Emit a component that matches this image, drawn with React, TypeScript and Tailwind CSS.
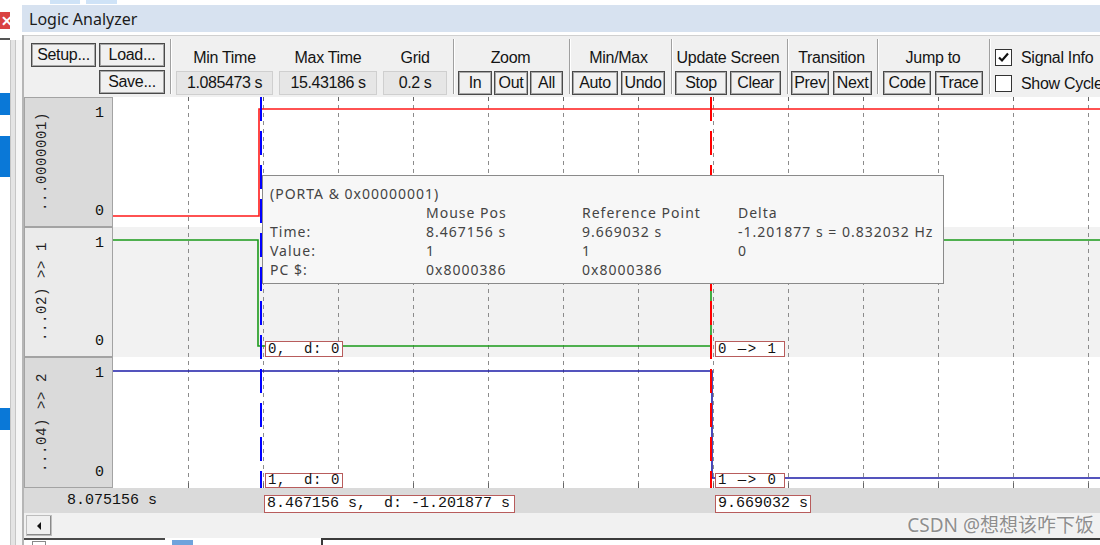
import React from 'react';

type Kids = { children?: React.ReactNode };

const GRID = Array.from({ length: 13 }, (_, i) => 75 * (i + 1));

function Btn({ w, className = '', children }: { w: string; className?: string } & Kids) {
  return (
    <div
      className={`${w} ${className} h-[24px] flex items-center justify-center border border-[#4a4a4a] bg-[#f0f0f0] shadow-[inset_0_0_0_1px_#a8a8a8] text-[16px] leading-none tracking-[-0.3px] text-[#141414]`}
    >
      {children}
    </div>
  );
}

function Field({ w, label, value, className = '' }: { w: string; label: string; value: string; className?: string }) {
  return (
    <div className={`${w} ${className} flex flex-col`}>
      <div className="h-[22px] leading-[22px] text-center tracking-[-0.3px]">{label}</div>
      <div className="mt-[2px] h-[24px] bg-[#e6e6e6] border border-[#cfcfcf] flex items-center justify-center text-[16px] tracking-[-0.4px]">
        {value}
      </div>
    </div>
  );
}

function Sep() {
  return <div className="w-[2px] shrink-0 my-[3px] border-l border-l-[#a0a0a0] border-r border-r-white" />;
}

function Group({ w, pl, label, children }: { w: string; pl: string; label: string } & Kids) {
  return (
    <div className={`${w} ${pl} shrink-0 flex`}>
      <div className="flex flex-col w-fit pt-[11px]">
        <div className="h-[22px] leading-[22px] text-center whitespace-nowrap tracking-[-0.3px]">{label}</div>
        <div className="mt-[2px] flex">{children}</div>
      </div>
    </div>
  );
}

function SigLabel({ name, bg, h }: { name: string; bg: string; h: string }) {
  return (
    <div className={`${h} ${bg} border border-[#a3a3a3] flex`}>
      <div className="w-[27px] pl-[9px] flex items-center">
        <span className="[writing-mode:vertical-rl] rotate-180 font-['Liberation_Mono',monospace] text-[14px] tracking-[0.6px] text-[#222] leading-[17px]">
          {name}
        </span>
      </div>
      <div className="flex-1 flex flex-col justify-between items-end pr-[8px] pt-[7px] pb-[5px] font-['Liberation_Mono',monospace] text-[15px] leading-[18px] text-[#111]">
        <span>1</span>
        <span>0</span>
      </div>
    </div>
  );
}

function Check({ checked, label, className = '' }: { checked: boolean; label: string; className?: string }) {
  return (
    <div className={`flex items-center h-[17px] ${className}`}>
      <div className="w-[17px] h-[17px] shrink-0 border border-[#333] bg-white flex items-center justify-center">
        {checked && (
          <svg width="13" height="13" viewBox="0 0 13 13">
            <path d="M2 6.5 L5 9.5 L11 2.5" stroke="#111" strokeWidth="2.2" fill="none" />
          </svg>
        )}
      </div>
      <span className="ml-[9px] whitespace-nowrap tracking-[-0.3px]">{label}</span>
    </div>
  );
}

export default function App() {
  const mono = "font-['Liberation_Mono',monospace]";
  return (
    <div className="w-[1100px] h-[545px] overflow-hidden bg-white flex flex-col font-['Liberation_Sans',Arial,sans-serif] text-[16px] text-[#141414]">
      {/* top strip */}
      <div className="h-[5px] flex bg-white">
        <div className="ml-[50px] w-[30px] h-[4px] bg-[#cfe3f7]" />
        <div className="ml-[6px] w-[31px] h-[4px] bg-[#cfe3f7]" />
      </div>

      <div className="flex h-[540px]">
        {/* left strip */}
        <div className="w-[22px] shrink-0 flex">
          <div className="w-[10px] flex flex-col">
            <div className="mt-[7px] h-[17px] bg-[#d94141] flex items-center justify-end overflow-hidden">
              <span className="text-white text-[14px] leading-none font-bold -mr-[3px]">✕</span>
            </div>
            <div className="mt-[9px] h-[2px] bg-[#555]" />
            <div className="mt-[53px] h-[22px] bg-[#0a78d7]" />
            <div className="mt-[21px] h-[41px] bg-[#0a78d7]" />
            <div className="mt-[231px] h-[22px] bg-[#0a78d7]" />
          </div>
          <div className="w-[12px] flex flex-col">
            <div className="h-[35px]" />
            <div className="flex-1 flex">
              <div className="w-[6px] bg-[#e4e4e4] border-x border-[#c6c6c6]" />
              <div className="w-[6px] bg-[#f6f6f6]" />
            </div>
          </div>
        </div>

        {/* main */}
        <div className="flex-1 min-w-0 flex flex-col">
          <div className="h-[27px] bg-[#d7e2f0] flex items-center pl-[7px] font-['Noto_Sans',sans-serif] text-[16px] text-[#1b1b1b]">
            Logic Analyzer
          </div>
          <div className="h-[3px] bg-white" />

          <div className="flex-1 flex flex-col border-l-2 border-[#b6b6b6]">
            {/* toolbar */}
            <div className="h-[62px] flex overflow-hidden bg-[#f0f0f0] border-t border-[#d0d0d0]">
              <div className="w-[146px] shrink-0 pl-[7px] pt-[7px] flex flex-col">
                <div className="flex">
                  <Btn w="w-[65px]">Setup...</Btn>
                  <Btn w="w-[66px]" className="ml-[3px]">Load...</Btn>
                </div>
                <div className="flex mt-[3px]">
                  <Btn w="w-[66px]" className="ml-[68px]">Save...</Btn>
                </div>
              </div>
              <Sep />
              <div className="w-[281px] shrink-0 pl-[4px] pt-[11px] flex">
                <Field w="w-[97px]" label="Min Time" value="1.085473 s" />
                <Field w="w-[98px]" className="ml-[6px]" label="Max Time" value="15.43186 s" />
                <Field w="w-[64px]" className="ml-[6px]" label="Grid" value="0.2 s" />
              </div>
              <Sep />
              <Group w="w-[114px]" pl="pl-[3px]" label="Zoom">
                <Btn w="w-[34px]">In</Btn>
                <Btn w="w-[34px]" className="ml-[2px]">Out</Btn>
                <Btn w="w-[33px]" className="ml-[2px]">All</Btn>
              </Group>
              <Sep />
              <Group w="w-[100px]" pl="pl-[1px]" label="Min/Max">
                <Btn w="w-[46px]">Auto</Btn>
                <Btn w="w-[44px]" className="ml-[3px]">Undo</Btn>
              </Group>
              <Sep />
              <Group w="w-[114px]" pl="pl-[2px]" label="Update Screen">
                <Btn w="w-[52px]">Stop</Btn>
                <Btn w="w-[51px]" className="ml-[3px]">Clear</Btn>
              </Group>
              <Sep />
              <Group w="w-[88px]" pl="pl-[2px]" label="Transition">
                <Btn w="w-[38px]">Prev</Btn>
                <Btn w="w-[39px]" className="ml-[4px]">Next</Btn>
              </Group>
              <Sep />
              <Group w="w-[110px]" pl="pl-[4px]" label="Jump to">
                <Btn w="w-[48px]">Code</Btn>
                <Btn w="w-[48px]" className="ml-[4px]">Trace</Btn>
              </Group>
              <Sep />
              <div className="pl-[4px] pt-[13px] shrink-0 flex flex-col">
                <Check checked label="Signal Info" />
                <Check checked={false} label="Show Cycles" className="mt-[9px]" />
              </div>
            </div>

            {/* signals */}
            <div className="h-[391px] flex">
              <div className="w-[89px] shrink-0 flex flex-col">
                <SigLabel name="...0000001)" bg="bg-[#dadada]" h="h-[130px]" />
                <SigLabel name="...02) >> 1" bg="bg-[#ebebeb]" h="h-[130px]" />
                <SigLabel name="...04) >> 2" bg="bg-[#dadada]" h="h-[131px]" />
              </div>
              <div className="flex-1 relative flex flex-col">
                <div className="h-[130px] bg-white" />
                <div className="h-[130px] bg-[#f2f2f2]" />
                <div className="h-[131px] bg-white" />

                <svg className="absolute left-0 top-0" width="987" height="391" viewBox="0 0 987 391">
                  {GRID.map((x) => (
                    <g key={x}>
                      <line x1={x + 0.5} y1={0} x2={x + 0.5} y2={391} stroke="#8c8c8c" strokeDasharray="4 4" />
                      <line x1={x + 0.5} y1={0} x2={x + 0.5} y2={4} stroke="#666" />
                      <line x1={x + 0.5} y1={386} x2={x + 0.5} y2={391} stroke="#666" />
                    </g>
                  ))}
                  <path d="M0 119 H146 V12 H987" stroke="#ff1a1a" strokeWidth="1.6" fill="none" />
                  <path d="M0 143 H145 V249 H598 V143 H987" stroke="#1a9a1a" strokeWidth="1.6" fill="none" />
                  <path d="M0 274 H599 V381 H987" stroke="#1c1ca8" strokeWidth="1.6" fill="none" />
                  <line x1={148} y1={0} x2={148} y2={391} stroke="#0000ff" strokeWidth="2" strokeDasharray="24 10" />
                  <line x1={598} y1={0} x2={598} y2={391} stroke="#ff0000" strokeWidth="2" strokeDasharray="24 10" />
                </svg>

                <div className={`absolute left-[152px] top-[244px] w-[78px] h-[16px] border border-[#b85c5c] bg-white ${mono} text-[14px] leading-[14px] pl-[2px] tracking-[0.6px] whitespace-pre text-[#111]`}>
                  {'0,  d: 0'}
                </div>
                <div className={`absolute left-[602px] top-[244px] w-[70px] h-[16px] border border-[#b85c5c] bg-white ${mono} text-[14px] leading-[14px] pl-[2px] tracking-[1.5px] whitespace-pre text-[#111]`}>
                  {'0 —> 1'}
                </div>
                <div className={`absolute left-[152px] top-[376px] w-[78px] h-[15px] border border-[#b85c5c] bg-white ${mono} text-[14px] leading-[13px] pl-[2px] tracking-[0.6px] whitespace-pre text-[#111]`}>
                  {'1,  d: 0'}
                </div>
                <div className={`absolute left-[602px] top-[376px] w-[70px] h-[15px] border border-[#b85c5c] bg-white ${mono} text-[14px] leading-[13px] pl-[2px] tracking-[1.5px] whitespace-pre text-[#111]`}>
                  {'1 —> 0'}
                </div>

                {/* tooltip */}
                <div className="absolute left-[149px] top-[78px] w-[682px] h-[109px] bg-[#f7f7f7] border border-[#8a8a8a] pl-[7px] pt-[8px] font-['Noto_Sans',sans-serif] text-[14px] leading-[19px] tracking-[1px] text-[#444]">
                  <div>(PORTA &amp; 0x00000001)</div>
                  <div className="grid grid-cols-[156px_156px_156px_1fr]">
                    <div />
                    <div>Mouse Pos</div>
                    <div>Reference Point</div>
                    <div>Delta</div>
                    <div>Time:</div>
                    <div>8.467156 s</div>
                    <div>9.669032 s</div>
                    <div>-1.201877 s = 0.832032 Hz</div>
                    <div>Value:</div>
                    <div>1</div>
                    <div>1</div>
                    <div>0</div>
                    <div>PC $:</div>
                    <div>0x8000386</div>
                    <div>0x8000386</div>
                    <div />
                  </div>
                </div>
              </div>
            </div>

            {/* time bar */}
            <div className={`h-[25px] bg-[#dadada] flex items-end ${mono} text-[15px] text-[#111]`}>
              <div className="w-[240px] pl-[43px] h-full flex items-center pt-[1px]">8.075156 s</div>
              <div className="w-[251px] h-[18px] border border-[#b85c5c] bg-white leading-[16px] pl-[2px] whitespace-pre">
                {'8.467156 s,  d: -1.201877 s'}
              </div>
              <div className="ml-[200px] w-[96px] h-[18px] border border-[#b85c5c] bg-white leading-[16px] pl-[2px]">
                9.669032 s
              </div>
            </div>

            {/* scrollbar */}
            <div className="h-[25px] bg-[#f1f1f1] flex items-center">
              <div className="ml-[2px] w-[26px] h-[21px] bg-[#f0f0f0] border border-[#bdbdbd] shadow-[inset_-1px_-1px_0_#8a8a8a] flex items-center justify-center">
                <svg width="5" height="8" viewBox="0 0 5 8">
                  <path d="M4 0 L0 4 L4 8 Z" fill="#111" />
                </svg>
              </div>
              <div className="ml-auto mr-[6px] shrink-0 whitespace-nowrap font-['Noto_Sans','Noto_Sans_CJK_SC',sans-serif] text-[19px] leading-none text-[#8e8e8e] [text-shadow:0_0_2px_#fff]">
                CSDN @想想该咋下饭
              </div>
            </div>

            {/* bottom */}
            <div className="h-[7px] flex">
              <div className="w-[141px] border-t-2 border-[#4a4a4a] flex">
                <div className="ml-[8px] mt-[1px] w-[14px] h-[5px] border border-[#8a8a8a] border-b-0 bg-white" />
              </div>
              <div className="w-[156px] flex">
                <div className="ml-[7px] mt-[2px] w-[21px] h-[5px] bg-[#6fa3dc]" />
              </div>
              <div className="flex-1 border-t-2 border-l-2 border-[#3a3a3a] bg-white" />
            </div>
          </div>
        </div>
      </div>
    </div>
  );
}
